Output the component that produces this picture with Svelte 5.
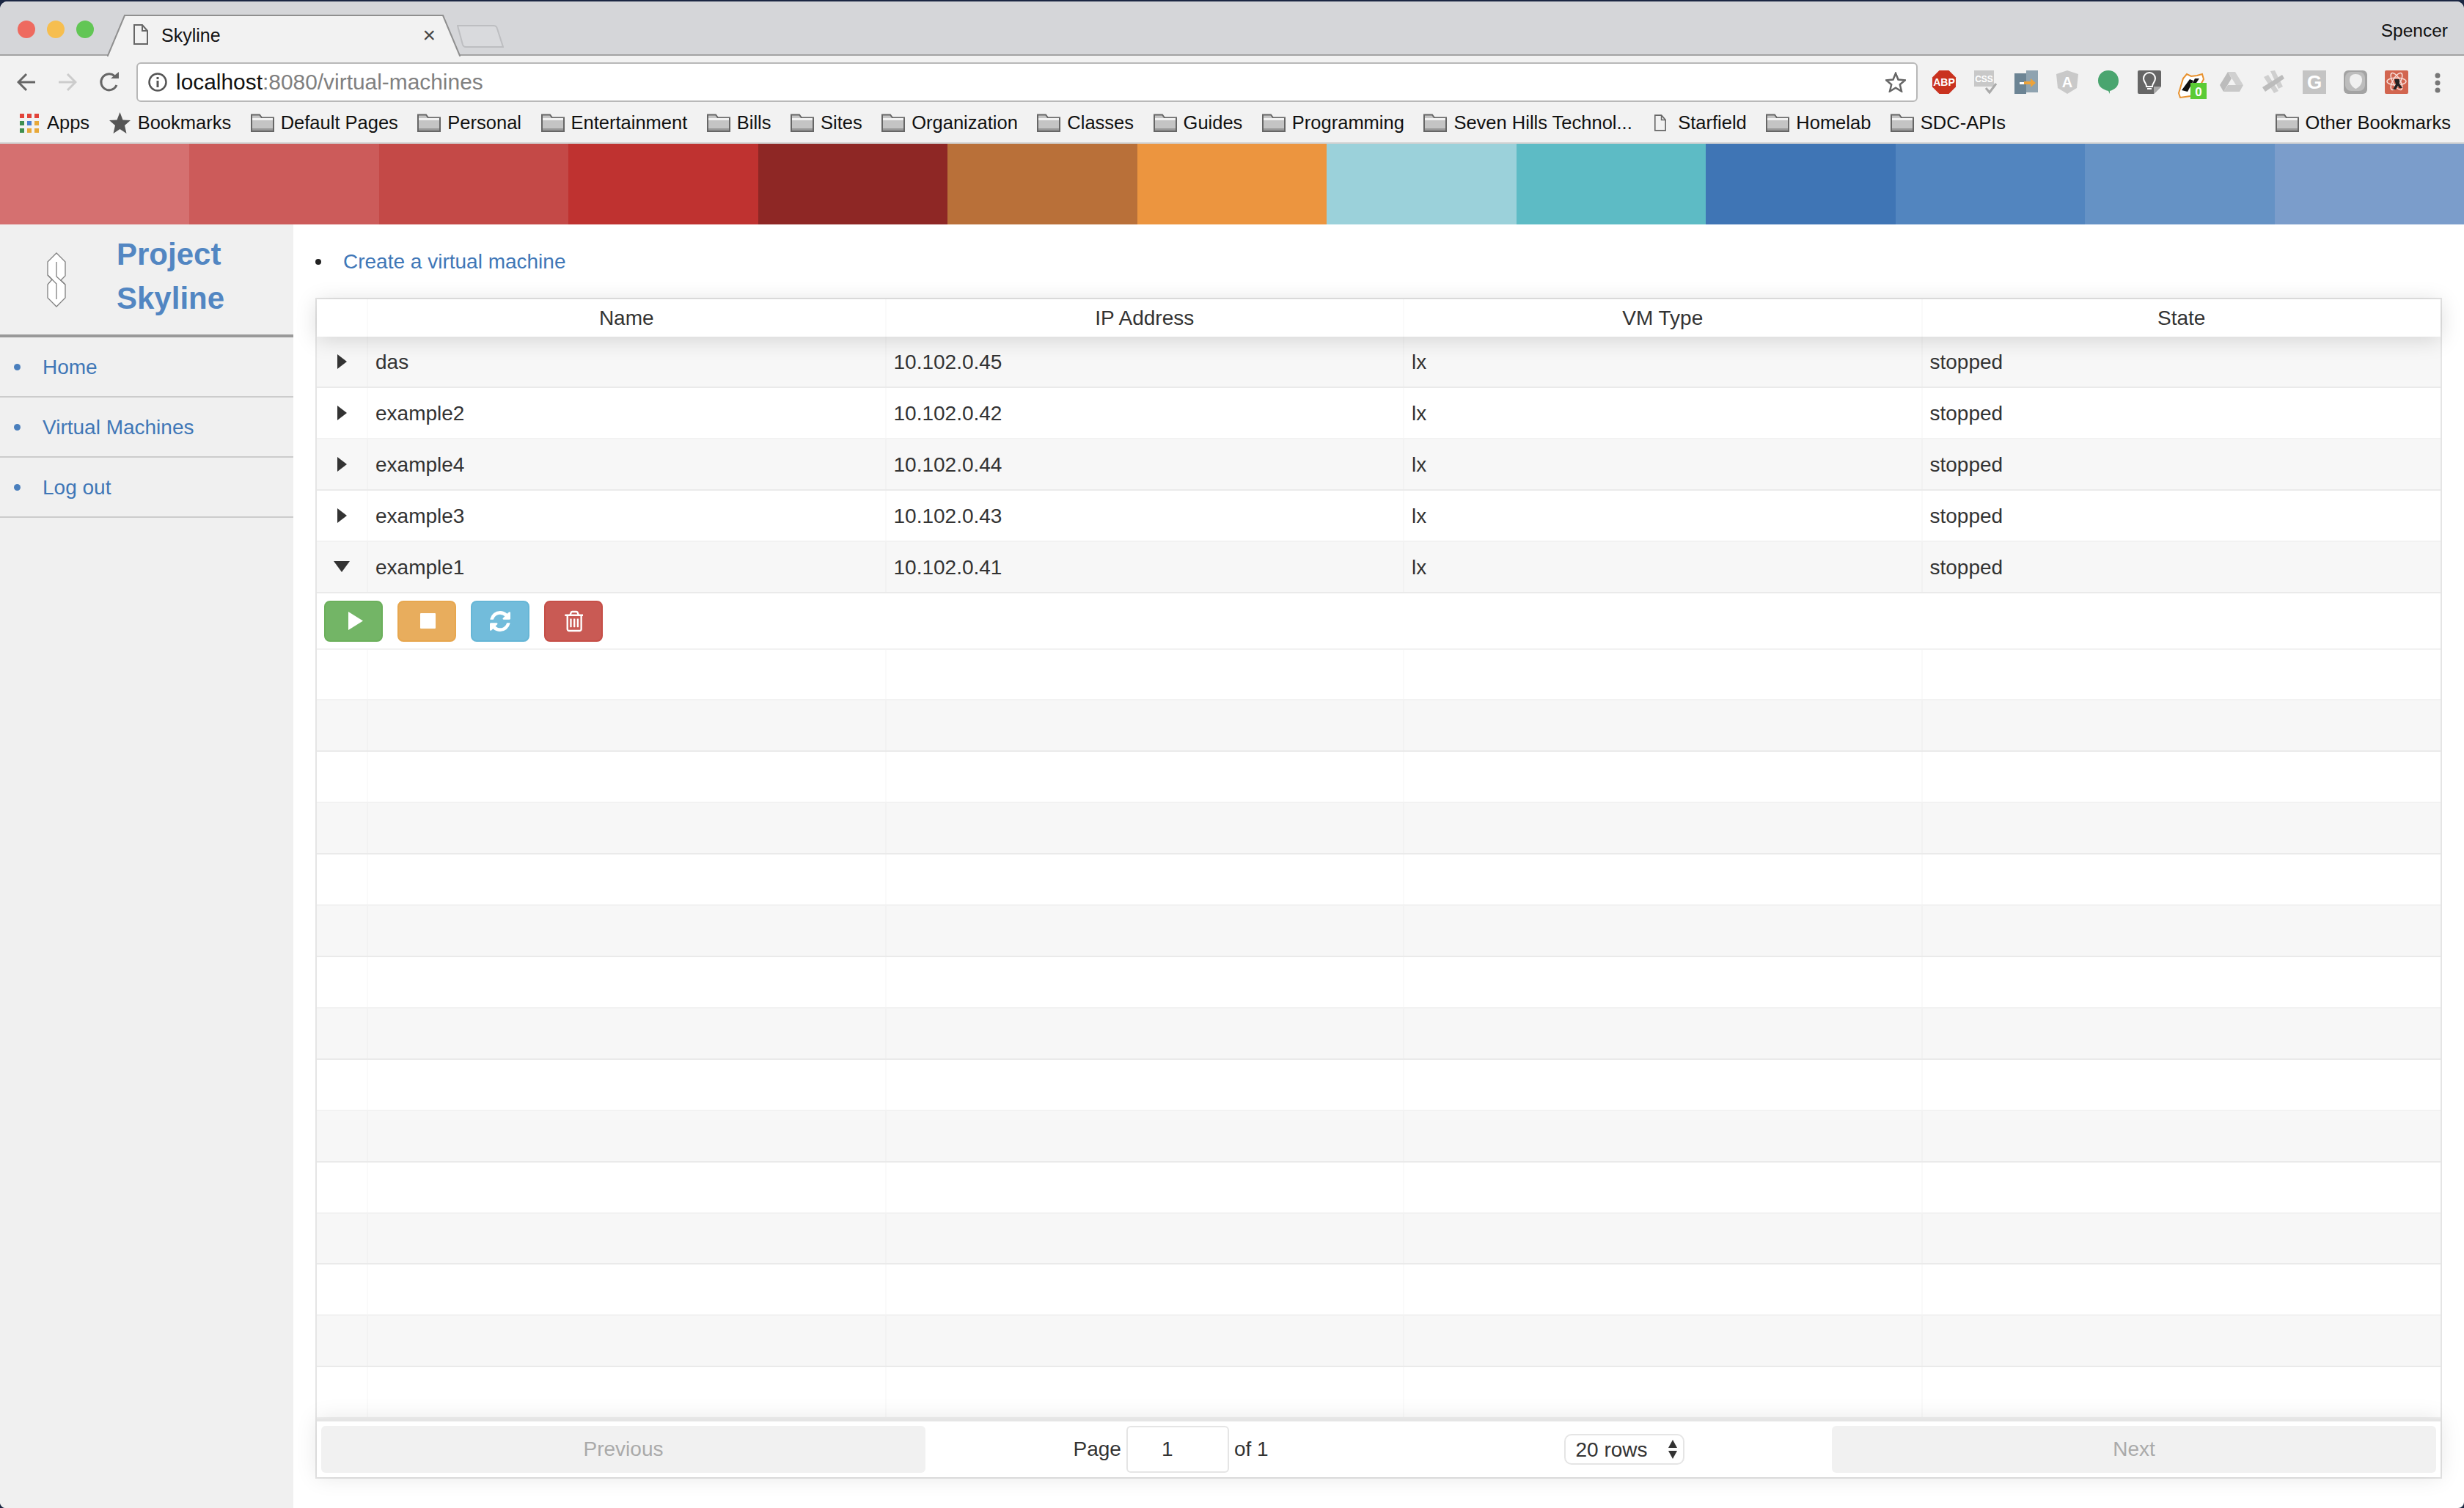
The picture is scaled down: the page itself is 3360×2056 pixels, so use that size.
<script>
  const stripes = ["#d57070", "#cc5b5a", "#c44947", "#bf3230", "#8e2725", "#b97039", "#ec953f", "#9bd1da", "#5dbbc5", "#3f75b5", "#5285bf", "#6592c5", "#7b9dcb"];

  const folders = ["Default Pages", "Personal", "Entertainment", "Bills", "Sites", "Organization", "Classes", "Guides", "Programming", "Seven Hills Technol..."];

  const navLinks = ["Home", "Virtual Machines", "Log out"];

  const machines = [
    { name: "das", ip: "10.102.0.45" },
    { name: "example2", ip: "10.102.0.42" },
    { name: "example4", ip: "10.102.0.44" },
    { name: "example3", ip: "10.102.0.43" },
    { name: "example1", ip: "10.102.0.41", open: true }
  ];

  const emptyRows = Array.from({ length: 15 }, (_, i) => i);
  const appColors = ["#e2443a", "#e2443a", "#e2443a", "#3f8f4f", "#4a80d0", "#e8a93a", "#3f8f4f", "#e8a93a", "#e8a93a"];
</script>

{#snippet folder()}
  <svg class="folder" viewBox="0 0 32 25">
    <path d="M1 24V1.500h11l3 4h16V24z" fill="#c4c4c4" stroke="#666" stroke-width="2" />
    <path d="M2 6h28v3H2z" fill="#f2f2f2" />
    <path d="M2 20h28v3H2z" fill="#999" />
  </svg>
{/snippet}

{#snippet page(cls)}
  <svg class={cls} viewBox="0 0 20 28">
    <path d="M1 1h11l7 8v18H1z M12 1v8h7" fill="none" stroke="#666" stroke-width="2" />
  </svg>
{/snippet}

<div class="window">
  <div class="tabbar">
    <div class="lights">
      <span class="light red"></span>
      <span class="light yellow"></span>
      <span class="light green"></span>
    </div>
    <div class="tab">
      <svg class="tab-shape" viewBox="0 0 482 58">
        <path d="M0 56H1L24 1H458L481 56H482V58H0z" fill="#f2f2f2" />
        <path d="M0 56L1 56L24 1H458L481 56H482" fill="none" stroke="#8f8f8f" stroke-width="2" />
      </svg>
      {@render page("tab-doc")}
      <span class="tab-title">Skyline</span>
      <span class="tab-close">×</span>
    </div>
    <svg class="new-tab" viewBox="0 0 64 31">
      <path d="M1 1H50Q54 1 55 5L63 30H12Q9 30 8 27z" fill="#d9dadd" stroke="#bdbec1" stroke-width="2" />
    </svg>
    <span class="profile">Spencer</span>
  </div>

  <div class="toolbar">
    <svg class="nav-icon" viewBox="0 0 26 26"><path d="M25 13H3M13 2L2 13l11 11" fill="none" stroke="#666" stroke-width="3" /></svg>
    <svg class="nav-icon" viewBox="0 0 26 26"><path d="M1 13h22M13 2l11 11-11 11" fill="none" stroke="#ccc" stroke-width="3" /></svg>
    <svg class="nav-icon" viewBox="0 0 28 28">
      <path d="M24 18A11 11 0 1 1 21 5.500" fill="none" stroke="#666" stroke-width="3" />
      <path d="M16 9h11V0z" fill="#666" />
    </svg>
    <div class="omnibox">
      <svg class="info" viewBox="0 0 26 26">
        <circle cx="13" cy="13" r="11.500" fill="none" stroke="#555" stroke-width="2.500" />
        <path d="M11.500 6h3v3h-3zM11.500 11h3v9h-3z" fill="#555" />
      </svg>
      <span class="url"><b>localhost</b>:8080/virtual-machines</span>
      <svg class="star" viewBox="0 0 28 28">
        <path d="M14 2l3.500 8.500 9.500.800-7.200 6 2.200 9.200L14 21.600 6 26.500l2.200-9.200-7.200-6 9.500-.800z" fill="none" stroke="#666" stroke-width="2.500" />
      </svg>
    </div>
    <div class="extensions">
      <div class="ext">
        <svg viewBox="0 0 32 32">
          <path d="M9.500 0h13L32 9.500v13L22.500 32h-13L0 22.500v-13z" fill="#c9321f" />
          <text x="16" y="21" class="ext-text abp">ABP</text>
        </svg>
      </div>
      <div class="ext">
        <svg viewBox="0 0 32 32">
          <path d="M1 0h27v22H1z" fill="#c8c8c8" />
          <text x="14.500" y="16" class="ext-text css">CSS</text>
          <path d="M17 24l5 6 9-12" fill="none" stroke="#aaa" stroke-width="3" />
        </svg>
      </div>
      <div class="ext">
        <svg viewBox="0 0 32 32">
          <path d="M0 4h16v28H0z" fill="#6c8494" />
          <path d="M16 0h16v30H16z" fill="#8fa3b0" />
          <path d="M7 16h6v3H7z" fill="#fff" />
          <path d="M13 15h9v-4l7 6-7 6v-4h-9z" fill="#eda33a" />
        </svg>
      </div>
      <div class="ext">
        <svg viewBox="0 0 32 32">
          <path d="M16 0l15 5-2 19-13 8-13-8L1 5z" fill="#c9c9c9" />
          <text x="16" y="23" class="ext-text angular">A</text>
        </svg>
      </div>
      <div class="ext">
        <svg viewBox="0 0 32 32"><path d="M16 0c8 0 14 6 14 14s-5 12-12 14v4l-2-4C8 26 2 22 2 14S8 0 16 0z" fill="#4aa56f" /></svg>
      </div>
      <div class="ext">
        <svg viewBox="0 0 32 32">
          <path d="M2 0h28a2 2 0 0 1 2 2v20L22 32H2a2 2 0 0 1-2-2V2a2 2 0 0 1 2-2z" fill="#666" />
          <path d="M32 22H22v10z" fill="#aaa" />
          <path d="M12 22c0-5-4-6-4-11a8 8 0 0 1 16 0c0 5-4 6-4 11zM13 25h6" fill="none" stroke="#fff" stroke-width="2" />
        </svg>
      </div>
      <div class="ext">
        <svg class="badger" viewBox="0 0 40 36">
          <path d="M8 8L13 2l6 3 8-1 7-2 2 7-8 14-10 9-14 2-2-6z" fill="#fff" stroke="#e8912d" stroke-width="2" />
          <path d="M6 24L17 9l5 2-8 15zM24 8l6 0-8 12-3-2z" fill="#111" />
          <rect x="18" y="14" width="22" height="22" fill="#5acb35" />
          <text x="29" y="32" class="ext-text badge">0</text>
        </svg>
      </div>
      <div class="ext">
        <svg viewBox="0 0 32 32">
          <path d="M11 2h10l11 18H22z" fill="#d0d0d0" />
          <path d="M11 2L0 20l5 9 11-18z" fill="#bcbcbc" />
          <path d="M5 29h22l5-9H11z" fill="#c8c8c8" />
        </svg>
      </div>
      <div class="ext">
        <svg viewBox="0 0 32 32">
          <path d="M3 9l6-3 14 22-6 3zM12 1l6-1 11 22-6 3z" fill="#cfcfcf" />
          <path d="M1 23L28 6l3 5L5 29z" fill="#bcbcbc" />
        </svg>
      </div>
      <div class="ext">
        <svg viewBox="0 0 32 32">
          <rect width="32" height="32" fill="#c4c4c4" />
          <text x="16" y="25" class="ext-text gee">G</text>
        </svg>
      </div>
      <div class="ext">
        <svg viewBox="0 0 32 32">
          <rect width="32" height="32" rx="6" fill="#a3a3a3" />
          <rect x="2" y="2" width="27" height="26" rx="8" fill="#bdbdbd" />
          <path d="M16 5c6 0 9 3 9 8 0 6-5 11-9 12-4-2-8-7-8-12 0-5 3-8 8-8z" fill="#f0f0f0" />
        </svg>
      </div>
      <div class="ext">
        <svg viewBox="0 0 32 32">
          <rect width="32" height="32" rx="2" fill="#d2654f" />
          <g fill="none" stroke="#f6dcd6" stroke-width="1.500">
            <ellipse cx="16" cy="15" rx="13" ry="5" />
            <ellipse cx="16" cy="15" rx="13" ry="5" transform="rotate(60 16 15)" />
            <ellipse cx="16" cy="15" rx="13" ry="5" transform="rotate(120 16 15)" />
          </g>
          <path d="M13 12h7v6l4 6h-4l-2-3-3 5h-4l4-7z" fill="#222" />
        </svg>
      </div>
      <div class="ext">
        <svg class="kebab" viewBox="0 0 8 28">
          <circle cx="4" cy="4" r="3.500" fill="#777" />
          <circle cx="4" cy="14" r="3.500" fill="#777" />
          <circle cx="4" cy="24" r="3.500" fill="#777" />
        </svg>
      </div>
    </div>
  </div>

  <div class="bookmarks">
    <span class="bookmark">
      <span class="apps">
        {#each appColors as color}
          <i style="background:{color}"></i>
        {/each}
      </span>
      Apps
    </span>
    <span class="bookmark">
      <svg class="bm-star" viewBox="0 0 29 29">
        <path d="M14.500 0l4 10.500 10.500.500-8 7 2.500 11-9-6-9 6 2.500-11-8-7 10.500-.500z" fill="#555" />
      </svg>
      Bookmarks
    </span>
    {#each folders as name}
      <span class="bookmark">{@render folder()}{name}</span>
    {/each}
    <span class="bookmark">{@render page("bm-doc")}Starfield</span>
    <span class="bookmark">{@render folder()}Homelab</span>
    <span class="bookmark">{@render folder()}SDC-APIs</span>
    <span class="bookmark other">{@render folder()}Other Bookmarks</span>
  </div>

  <div class="stripes">
    {#each stripes as color}
      <span style="background:{color}"></span>
    {/each}
  </div>

  <div class="app">
    <aside class="sidebar">
      <div class="brand">
        <svg class="logo" viewBox="0 0 26 75">
          <path d="M13 1L25 13V32L19 38L25 44V62L13 74L1 62V44L7 37L1 31V13Z" fill="#fff" stroke="#808080" stroke-width="1.300" />
          <path d="M13 13V33L25 44M1 31L13 43V64" fill="none" stroke="#808080" stroke-width="1.300" />
        </svg>
        <h1>Project<br />Skyline</h1>
      </div>
      <ul class="nav">
        {#each navLinks as link}
          <li><span class="dot"></span><a href="#top">{link}</a></li>
        {/each}
      </ul>
    </aside>

    <main class="content">
      <div class="create">
        <span class="create-dot"></span>
        <a href="#top">Create a virtual machine</a>
      </div>

      <div class="table">
        <div class="thead row-grid">
          <div class="cell"></div>
          <div class="cell">Name</div>
          <div class="cell">IP Address</div>
          <div class="cell">VM Type</div>
          <div class="cell">State</div>
        </div>

        <div class="tbody">
          {#each machines as vm, i}
            <div class="row row-grid" class:striped={i % 2 === 0}>
              <div class="cell expander">
                <span class={vm.open ? "tri-down" : "tri-right"}></span>
              </div>
              <div class="cell">{vm.name}</div>
              <div class="cell">{vm.ip}</div>
              <div class="cell">lx</div>
              <div class="cell">stopped</div>
            </div>
            {#if vm.open}
              <div class="actions">
                <button class="btn green" aria-label="Start">
                  <svg class="i-play" viewBox="0 0 20 25"><path d="M0 0l20 12.500L0 25z" fill="#fff" /></svg>
                </button>
                <button class="btn orange" aria-label="Stop">
                  <svg class="i-stop" viewBox="0 0 21 21"><rect width="21" height="21" rx="1" fill="#fff" /></svg>
                </button>
                <button class="btn blue" aria-label="Restart">
                  <svg class="i-refresh" viewBox="128 128 1536 1536"><path d="M1639 1056q0 5-1 7-64 268-268 434.500t-478 166.500q-146 0-282.500-55t-243.500-157l-129 129q-19 19-45 19t-45-19-19-45v-448q0-26 19-45t45-19h448q26 0 45 19t19 45-19 45l-137 137q71 66 161 102t187 36q134 0 250-65t186-179q11-17 53-117 8-23 30-23h192q13 0 22.500 9.500t9.500 22.500zm25-800v448q0 26-19 45t-45 19h-448q-26 0-45-19t-19-45 19-45l138-138q-148-137-349-137-134 0-250 65t-186 179q-11 17-53 117-8 23-30 23h-199q-13 0-22.500-9.500t-9.500-22.500v-7q65-268 270-434.500t480-166.500q146 0 284 55.500t245 156.500l130-129q19-19 45-19t45 19 19 45z" fill="#fff" /></svg>
                </button>
                <button class="btn red" aria-label="Delete">
                  <svg class="i-trash" viewBox="128 128 1408 1536"><path d="M704 736v576q0 14-9 23t-23 9h-64q-14 0-23-9t-9-23v-576q0-14 9-23t23-9h64q14 0 23 9t9 23zm256 0v576q0 14-9 23t-23 9h-64q-14 0-23-9t-9-23v-576q0-14 9-23t23-9h64q14 0 23 9t9 23zm256 0v576q0 14-9 23t-23 9h-64q-14 0-23-9t-9-23v-576q0-14 9-23t23-9h64q14 0 23 9t9 23zm128 724v-948h-896v948q0 22 7 40.500t14.500 27 10.500 8.500h832q3 0 10.500-8.500t14.500-27 7-40.500zm-672-1076h448l-48-117q-7-9-17-11h-317q-10 2-17 11zm928 32v64q0 14-9 23t-23 9h-96v948q0 83-47 143.500t-113 60.500h-832q-66 0-113-58.500t-47-141.500v-952h-96q-14 0-23-9t-9-23v-64q0-14 9-23t23-9h309l70-167q15-37 54-63t79-26h320q40 0 79 26t54 63l70 167h309q14 0 23 9t9 23z" fill="#fff" /></svg>
                </button>
              </div>
            {/if}
          {/each}
          {#each emptyRows as i}
            <div class="row row-grid" class:striped={i % 2 === 1}>
              <div class="cell"></div>
              <div class="cell"></div>
              <div class="cell"></div>
              <div class="cell"></div>
              <div class="cell"></div>
            </div>
          {/each}
        </div>

        <div class="pagination">
          <button class="page-btn" disabled>Previous</button>
          <div class="page-center">
            <span class="page-info">
              Page
              <input class="page-input" value="1" />
              of 1
            </span>
            <span class="rows-select">
              <select>
                <option>20 rows</option>
              </select>
              <svg class="select-arrows" viewBox="0 0 12 26">
                <path d="M6 0l6 11H0z" fill="#333" />
                <path d="M0 15h12L6 26z" fill="#333" />
              </svg>
            </span>
          </div>
          <button class="page-btn" disabled>Next</button>
        </div>
      </div>
    </main>
  </div>
</div>

<style>
  :global(body) {
    margin: 0;
    background: #1b2743;
    font-family: "Liberation Sans", Arial, sans-serif;
  }

  .window {
    box-sizing: border-box;
    margin-top: 2px;
    height: 2054px;
    display: flex;
    flex-direction: column;
    overflow: hidden;
    border-radius: 10px 10px 8px 8px;
    background: #fff;
    color: #333;
  }

  /* Browser chrome */
  .tabbar {
    box-sizing: border-box;
    height: 74px;
    flex: none;
    display: flex;
    align-items: flex-end;
    background: #d5d6d9;
    border-bottom: 2px solid #a3a3a3;
  }

  .lights {
    align-self: flex-start;
    display: flex;
    gap: 16px;
    margin-top: 26px;
    padding-left: 24px;
  }

  .light {
    width: 24px;
    height: 24px;
    border-radius: 50%;
  }

  .red { background: #ee6a5f; }
  .yellow { background: #f6be4f; }
  .green { background: #62c655; }

  .tab {
    position: relative;
    box-sizing: border-box;
    width: 482px;
    height: 56px;
    margin-left: 18px;
    margin-bottom: -2px;
    padding: 0 36px;
    display: flex;
    align-items: center;
    color: #111;
  }

  .tab-shape {
    position: absolute;
    left: 0;
    top: 0;
    width: 482px;
    height: 58px;
  }

  :global(.tab-doc) {
    position: relative;
    width: 20px;
    height: 28px;
    margin-top: -2px;
  }

  .tab-title {
    position: relative;
    margin-left: 18px;
    font-size: 25px;
  }

  .tab-close {
    position: relative;
    margin-left: auto;
    font-size: 30px;
    color: #444;
    margin-right: -2px;
  }

  .new-tab {
    width: 64px;
    height: 31px;
    margin-left: -5px;
    margin-bottom: 9px;
  }

  .profile {
    align-self: flex-start;
    margin: 26px 22px 0 auto;
    font-size: 24.500px;
    color: #111;
  }

  .toolbar {
    flex: none;
    height: 65px;
    box-sizing: border-box;
    padding: 9px 0 0 23px;
    display: flex;
    align-items: flex-start;
    background: #f2f2f2;
  }

  .nav-icon {
    width: 26px;
    height: 26px;
    margin: 14px 30px 0 0;
  }

  .nav-icon:nth-child(3) {
    width: 28px;
    height: 28px;
    margin: 13px 23px 0 0;
  }

  .omnibox {
    flex: 1;
    box-sizing: border-box;
    height: 54px;
    display: flex;
    align-items: center;
    padding: 0 14px;
    background: #fff;
    border: 2px solid #b8b8b8;
    border-radius: 6px;
  }

  .info {
    width: 26px;
    height: 26px;
  }

  .url {
    margin-left: 12px;
    font-size: 29.900px;
    color: #808080;
  }

  .url b {
    font-weight: 400;
    color: #111;
  }

  .star {
    width: 28px;
    height: 28px;
    margin-left: auto;
  }

  .extensions {
    display: flex;
    margin-left: 8px;
    padding-right: 8px;
  }

  .ext {
    width: 56.100px;
    height: 54px;
    display: flex;
    justify-content: center;
    padding-top: 11px;
    box-sizing: border-box;
  }

  .ext svg {
    width: 32px;
    height: 32px;
    overflow: visible;
  }

  .ext .badger {
    width: 40px;
    height: 36px;
    margin-left: 4px;
    margin-top: 3px;
  }

  .ext .kebab {
    width: 8px;
    height: 28px;
    margin-top: 3px;
  }

  .ext-text {
    text-anchor: middle;
    font-family: "Liberation Sans", Arial, sans-serif;
    font-weight: 700;
    fill: #fff;
  }

  .abp { font-size: 14px; }
  .css { font-size: 12px; }
  .angular { font-size: 20px; }
  .badge { font-size: 17px; }
  .gee { font-size: 26px; }

  .bookmarks {
    flex: none;
    box-sizing: border-box;
    height: 55px;
    padding: 0 18px 0 27px;
    display: flex;
    align-items: center;
    gap: 26.500px;
    background: #f2f2f2;
    border-bottom: 2px solid #d2d2d2;
    font-size: 25.500px;
    color: #111;
    white-space: nowrap;
  }

  .bookmark {
    display: flex;
    align-items: center;
    gap: 9px;
  }

  .bookmark.other {
    margin-left: auto;
  }

  .apps {
    display: grid;
    grid-template-columns: repeat(3, 6px);
    grid-auto-rows: 6px;
    gap: 4px;
    margin-right: 2px;
  }

  .apps i {
    display: block;
  }

  .bm-star {
    width: 29px;
    height: 29px;
    margin-right: 1px;
  }

  :global(.folder) {
    width: 32px;
    height: 25px;
  }

  :global(.bm-doc) {
    width: 16px;
    height: 25px;
    margin: 0 7px 0 4px;
  }

  .stripes {
    flex: none;
    height: 110px;
    display: flex;
  }

  .stripes span {
    flex: 1;
  }

  /* App layout */
  .app {
    flex: 1;
    min-height: 0;
    display: flex;
  }

  .sidebar {
    flex: none;
    width: 400px;
    background: #f0f0f0;
  }

  .brand {
    box-sizing: border-box;
    height: 154px;
    display: flex;
    align-items: center;
    padding-left: 64px;
    border-bottom: 4px solid #999;
  }

  .logo {
    flex: none;
    width: 26px;
    height: 75px;
    margin-right: 70px;
  }

  .brand h1 {
    margin: -8px 0 0 -1px;
    font-size: 42px;
    line-height: 60px;
    font-weight: 700;
    color: #5286c2;
  }

  .nav {
    list-style: none;
    margin: 0;
    padding: 0;
  }

  .nav li {
    box-sizing: border-box;
    height: 82px;
    display: flex;
    align-items: center;
    padding: 1px 0 0 19px;
    border-bottom: 2px solid #ccc;
    font-size: 28px;
  }

  .dot {
    width: 9px;
    height: 9px;
    margin-right: 30px;
    border-radius: 50%;
    background: #4a7fbd;
  }

  a {
    color: #3f77b7;
    text-decoration: none;
  }

  .content {
    flex: 1;
    min-width: 0;
    box-sizing: border-box;
    padding: 31px 30px 0;
    font-size: 28px;
  }

  .create {
    display: flex;
    align-items: center;
    line-height: 40px;
    margin-bottom: 29px;
  }

  .create-dot {
    width: 8px;
    height: 8px;
    margin-right: 30px;
    border-radius: 50%;
    background: #222;
  }

  /* Table */
  .table {
    box-sizing: border-box;
    height: 1610px;
    display: flex;
    flex-direction: column;
    border: 2px solid rgba(0, 0, 0, 0.1);
  }

  .row-grid {
    display: grid;
    grid-template-columns: 70px repeat(4, 1fr);
  }

  .thead {
    flex: none;
    position: relative;
    z-index: 1;
    height: 51px;
    background: #fff;
    box-shadow: 0 4px 30px rgba(0, 0, 0, 0.15);
    text-align: center;
  }

  .cell {
    display: flex;
    align-items: center;
    padding: 0 10px;
    min-width: 0;
    border-right: 2px solid rgba(0, 0, 0, 0.02);
  }

  .thead .cell {
    justify-content: center;
  }

  .cell:last-child {
    border-right: 0;
  }

  .tbody {
    flex: 1;
    min-height: 0;
    display: flex;
    flex-direction: column;
  }

  .row {
    flex: 1 0 0;
    box-sizing: border-box;
    border-bottom: 2px solid rgba(0, 0, 0, 0.05);
  }

  .row .cell {
    padding-top: 2px;
  }

  .striped {
    background: rgba(0, 0, 0, 0.03);
  }

  .row .expander {
    justify-content: center;
    padding: 0;
  }

  .tri-right {
    border-style: solid;
    border-width: 10px 0 10px 13px;
    border-color: transparent transparent transparent #333;
  }

  .tri-down {
    border-style: solid;
    border-width: 15px 11px 0;
    border-color: #333 transparent transparent;
  }

  .actions {
    flex: 0 0 77px;
    box-sizing: border-box;
    display: flex;
    align-items: flex-start;
    gap: 20px;
    padding: 10px 0 0 10px;
    border-bottom: 2px solid rgba(0, 0, 0, 0.05);
  }

  .btn {
    box-sizing: border-box;
    width: 80px;
    height: 56px;
    padding: 0;
    display: flex;
    align-items: center;
    justify-content: center;
    border: 2px solid;
    border-radius: 8px;
  }

  .btn.green { background: #73b566; border-color: #6cb05c; }
  .btn.orange { background: #e8ad5d; border-color: #e7a74f; }
  .btn.blue { background: #72bcdb; border-color: #66b6d6; }
  .btn.red { background: #c95a54; border-color: #c64f48; }

  .i-play { width: 20px; height: 25px; margin-left: 6px; }
  .i-stop { width: 21px; height: 21px; margin-left: 3px; }
  .i-refresh { width: 28px; height: 28px; }
  .i-trash { width: 26px; height: 30px; }

  .pagination {
    flex: none;
    position: relative;
    height: 80px;
    box-sizing: border-box;
    display: flex;
    padding: 6px;
    background: #fff;
    border-top: 4px solid rgba(0, 0, 0, 0.1);
    box-shadow: 0 0 30px rgba(0, 0, 0, 0.1);
  }

  .page-btn {
    flex: 1;
    border: 0;
    border-radius: 6px;
    padding: 0;
    background: #f1f1f1;
    color: #aaa;
    font: inherit;
  }

  .page-center {
    flex: 1.500;
    display: flex;
    align-items: center;
    justify-content: space-around;
  }

  .page-info {
    display: flex;
    align-items: center;
    gap: 7px;
  }

  .page-input {
    box-sizing: border-box;
    width: 140px;
    height: 64px;
    padding: 0 28px 0 0;
    text-align: center;
    border: 2px solid rgba(0, 0, 0, 0.1);
    border-radius: 6px;
    background: #fff;
    color: #333;
    font: inherit;
    outline: none;
  }

  .rows-select {
    position: relative;
    display: block;
  }

  select {
    box-sizing: border-box;
    display: block;
    width: 164px;
    height: 42px;
    padding: 0 0 0 14px;
    appearance: none;
    border: 2px solid rgba(0, 0, 0, 0.1);
    border-radius: 10px;
    background: #fff;
    color: #333;
    font: inherit;
  }

  .select-arrows {
    position: absolute;
    right: 10px;
    top: 8px;
    width: 12px;
    height: 26px;
  }
</style>
